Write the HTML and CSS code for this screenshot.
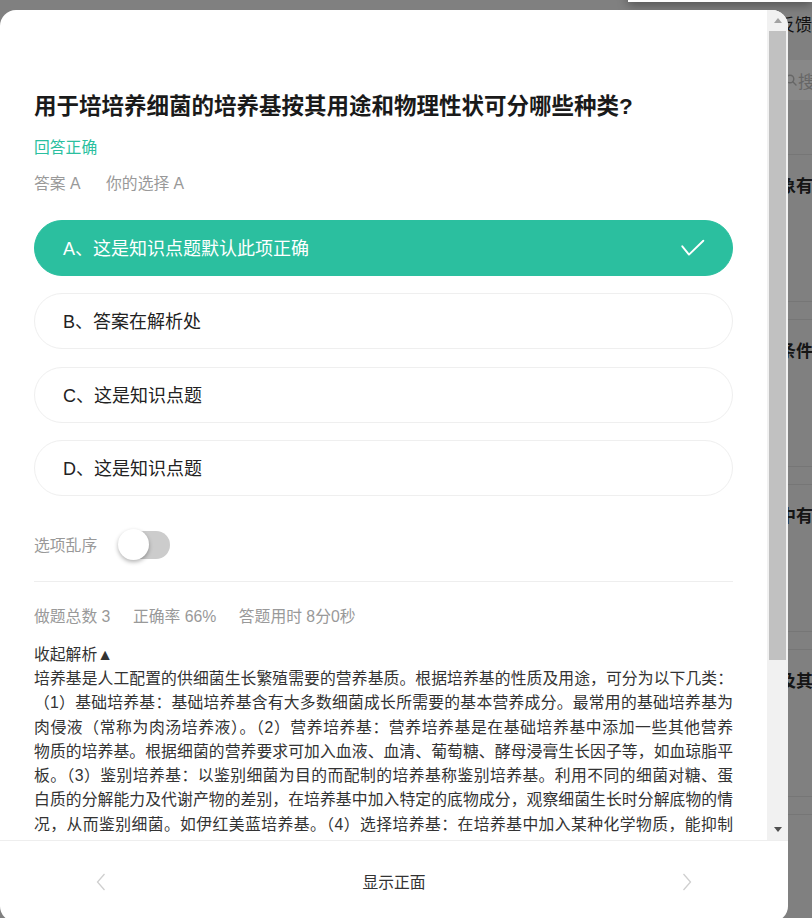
FILE: index.html
```html
<!DOCTYPE html>
<html lang="zh-CN">
<head>
<meta charset="utf-8">
<title>题目解析</title>
<link rel="stylesheet" href="styles.css">
</head>
<body>
<div class="page">
  <div class="popup"></div>
  <div class="page-head">反馈</div>
  <div class="search">
    <svg class="search-icon" width="12" height="12" viewBox="0 0 12 12"><circle cx="5" cy="5" r="3.8" fill="none" stroke="#666" stroke-width="1.4"/><path d="M8 8l3 3" stroke="#666" stroke-width="1.4" stroke-linecap="round"/></svg>
    <span>搜</span>
  </div>
  <div class="cards">
    <div class="card">象有</div>
    <div class="card">条件</div>
    <div class="card">中有</div>
    <div class="card">及其</div>
    <div class="card"></div>
  </div>
</div>

<div class="modal">
  <div class="body-row">
    <div class="scroll">
      <div class="content">
        <h1 class="title">用于培培养细菌的培养基按其用途和物理性状可分哪些种类?</h1>
        <div class="result">回答正确</div>
        <div class="answer"><span>答案 A</span><span>你的选择 A</span></div>
        <ul class="options">
          <li class="option correct"><span>A、这是知识点题默认此项正确</span>
            <svg class="check" width="24" height="24" viewBox="0 0 24 24"><path d="M1.3 11.3 L8 19.6 L22.3 5.7" fill="none" stroke="#fff" stroke-width="1.9" stroke-linecap="round" stroke-linejoin="round"/></svg>
          </li>
          <li class="option"><span>B、答案在解析处</span></li>
          <li class="option"><span>C、这是知识点题</span></li>
          <li class="option"><span>D、这是知识点题</span></li>
        </ul>
        <div class="shuffle">
          <span>选项乱序</span>
          <div class="toggle"><div class="knob"></div></div>
        </div>
        <hr class="divider">
        <div class="stats"><span>做题总数 3</span><span>正确率 66%</span><span>答题用时 8分0秒</span></div>
        <div class="analysis">
          <div class="toggle-analysis">收起解析▲</div>
          <p>培养基是人工配置的供细菌生长繁殖需要的营养基质。根据培养基的性质及用途，可分为以下几类：<br>（1）基础培养基：基础培养基含有大多数细菌成长所需要的基本营养成分。最常用的基础培养基为<br>肉侵液（常称为肉汤培养液）。（2）营养培养基：营养培养基是在基础培养基中添加一些其他营养<br>物质的培养基。根据细菌的营养要求可加入血液、血清、葡萄糖、酵母浸膏生长因子等，如血琼脂平<br>板。（3）鉴别培养基：以鉴别细菌为目的而配制的培养基称鉴别培养基。利用不同的细菌对糖、蛋<br>白质的分解能力及代谢产物的差别，在培养基中加入特定的底物成分，观察细菌生长时分解底物的情<br>况，从而鉴别细菌。如伊红美蓝培养基。（4）选择培养基：在培养基中加入某种化学物质，能抑制</p>
        </div>
      </div>
    </div>
    <div class="scrollbar">
      <div class="sb-btn"><span class="arrow-up"></span></div>
      <div class="sb-track"><div class="sb-thumb"></div></div>
      <div class="sb-btn"><span class="arrow-down"></span></div>
    </div>
  </div>
  <div class="footer">
    <svg class="chev" width="10" height="18" viewBox="0 0 10 18"><polyline points="8.5,1 1.5,9 8.5,17" fill="none" stroke="#cfcfcf" stroke-width="1.3"/></svg>
    <span class="flip">显示正面</span>
    <svg class="chev" width="10" height="18" viewBox="0 0 10 18"><polyline points="1.5,1 8.5,9 1.5,17" fill="none" stroke="#cfcfcf" stroke-width="1.3"/></svg>
  </div>
</div>
</body>
</html>
```

FILE: styles.css
```css
html, body {
  margin: 0;
  padding: 0;
}
body {
  position: relative;
  height: 918px;
  overflow: hidden;
  background: #808080;
  font-family: "Liberation Sans", "Noto Sans CJK SC", sans-serif;
}

/* ---------- background page (dimmed) ---------- */
.page {
  margin-left: 770px;
  width: 400px;
}
.popup {
  position: absolute;
  top: -40px;
  right: 0;
  width: 184px;
  height: 42px;
  background: #ffffff;
  box-shadow: 0 3px 10px rgba(0, 0, 0, 0.35);
}
.page-head {
  height: 52px;
  line-height: 52px;
  padding-left: 8px;
  font-size: 17px;
  color: #111;
  white-space: nowrap;
}
.search {
  margin-top: 8px;
  height: 40px;
  background: #888888;
  display: flex;
  align-items: center;
  gap: 1px;
  padding-left: 15px;
  color: #666;
  font-size: 17px;
  white-space: nowrap;
}
.cards {
  margin-top: 54px;
  display: flex;
  flex-direction: column;
  gap: 17px;
}
.card {
  height: 148px;
  box-sizing: border-box;
  border-top: 1px solid #767676;
  border-bottom: 1px solid #767676;
  padding: 21px 0 0 9px;
  font-size: 17px;
  line-height: 21px;
  font-weight: 700;
  color: #151515;
  white-space: nowrap;
}

/* ---------- modal ---------- */
.modal {
  position: absolute;
  left: 0;
  top: 10px;
  width: 788px;
  height: 912px;
  background: #ffffff;
  border-radius: 16px;
  overflow: hidden;
  display: flex;
  flex-direction: column;
}
.body-row {
  flex: none;
  height: 830px;
  display: flex;
}
.scroll {
  flex: 1;
  min-width: 0;
  overflow: hidden;
}

/* scrollbar */
.scrollbar {
  flex: none;
  width: 21px;
  display: flex;
  flex-direction: column;
  background: #f1f1f1;
}
.sb-btn {
  flex: none;
  height: 21px;
  display: flex;
  align-items: center;
  justify-content: center;
}
.arrow-up {
  width: 0;
  height: 0;
  border-left: 4.5px solid transparent;
  border-right: 4.5px solid transparent;
  border-bottom: 5px solid #a3a3a3;
}
.arrow-down {
  width: 0;
  height: 0;
  border-left: 4.5px solid transparent;
  border-right: 4.5px solid transparent;
  border-top: 5px solid #505050;
}
.sb-track {
  flex: 1;
  padding: 0 2px;
}
.sb-thumb {
  height: 629px;
  background: #c1c1c1;
}

.content {
  padding: 81.5px 34px 0 34px;
}
.title {
  margin: 0;
  font-size: 22.5px;
  line-height: 30px;
  font-weight: 700;
  color: #1a1a1a;
  white-space: nowrap;
}
.result {
  margin-top: 14.5px;
  font-size: 15.8px;
  line-height: 24px;
  color: #2bbf9f;
}
.answer {
  margin-top: 12px;
  display: flex;
  gap: 25.5px;
  font-size: 15.8px;
  line-height: 24px;
  color: #999999;
}
.options {
  margin: 24px 0 0;
  padding: 0;
  list-style: none;
  display: flex;
  flex-direction: column;
  gap: 17.4px;
}
.option {
  height: 56px;
  box-sizing: border-box;
  border: 1px solid #efefef;
  border-radius: 28px;
  display: flex;
  align-items: center;
  justify-content: space-between;
  padding: 0 27px 2px 28px;
  font-size: 18px;
  color: #222222;
}
.option.correct {
  background: #2bbf9f;
  border-color: #2bbf9f;
  color: #ffffff;
}
.check {
  flex: none;
}
.shuffle {
  margin-top: 33px;
  height: 31px;
  display: flex;
  align-items: center;
  gap: 22px;
  font-size: 15.8px;
  color: #999999;
}
.toggle {
  width: 51px;
  height: 28px;
  border-radius: 14px;
  background: #cccccc;
  display: flex;
  align-items: center;
}
.knob {
  flex: none;
  width: 31px;
  height: 31px;
  margin-left: -1px;
  border-radius: 50%;
  background: #ffffff;
  box-shadow: 0 2px 4px rgba(0, 0, 0, 0.3);
}
.divider {
  margin: 21px 0 0;
  border: 0;
  border-top: 1px solid #eeeeee;
  height: 0;
}
.stats {
  margin-top: 23px;
  display: flex;
  gap: 22.5px;
  font-size: 15.8px;
  line-height: 24px;
  color: #999999;
}
.analysis {
  margin-top: 13.5px;
  font-size: 15.8px;
  line-height: 24.3px;
  color: #333333;
}
.analysis p {
  margin: 0;
  text-align: justify;
  text-align-last: justify;
}

.footer {
  flex: 1;
  border-top: 1px solid #eeeeee;
  display: flex;
  align-items: center;
  justify-content: space-between;
  padding: 0 96px;
}
.flip {
  font-size: 15.8px;
  color: #333333;
}
.chev {
  flex: none;
}
```
